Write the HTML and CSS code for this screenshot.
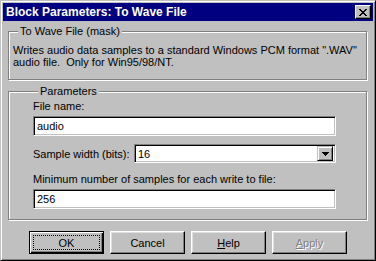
FILE: index.html
```html
<!DOCTYPE html>
<html lang="en">
<head>
    <meta charset="UTF-8">
    <title>Block Parameters: To Wave File</title>
    <link rel="stylesheet" href="styles.css">
</head>
<body>

    <div class="window">

        <div class="titleBar">
            <span class="titleText">Block Parameters: To Wave File</span>
            <button class="btnClose">
                <svg width="8" height="7" viewBox="0 0 8 7">
                    <path d="M0 0h2v1h1v1h2V1h1V0h2v1H7v1H6v1H5v1h1v1h1v1h1v1H6V6H5V5H3v1H2v1H0V6h1V5h1V4h1V3H2V2H1V1H0z" fill="#000"/>
                </svg>
            </button>
        </div>

        <fieldset class="grupo grupoMask">
            <legend>To Wave File (mask)</legend>
            <p class="descripcion">Writes audio data samples to a standard Windows PCM format ".WAV"<br>audio file.&nbsp; Only for Win95/98/NT.</p>
        </fieldset>

        <fieldset class="grupo grupoParams">
            <legend>Parameters</legend>

            <div class="etiqueta">File name:</div>
            <div class="campo">audio</div>

            <div class="filaSelect">
                <span class="etiqueta">Sample width (bits):</span>
                <div class="combo">
                    <span class="comboValor">16</span>
                    <span class="comboFlecha">
                        <svg width="7" height="4" viewBox="0 0 7 4"><path d="M0 0h7v1H6v1H5v1H4v1H3V3H2V2H1V1H0z" fill="#000"/></svg>
                    </span>
                </div>
            </div>

            <div class="etiqueta etiquetaMin">Minimum number of samples for each write to file:</div>
            <div class="campo">256</div>
        </fieldset>

        <div class="botonera">
            <button class="btn btnDefault"><span class="foco">OK</span></button>
            <button class="btn">Cancel</button>
            <button class="btn"><u>H</u>elp</button>
            <button class="btn btnDisabled"><u>A</u>pply</button>
        </div>

    </div>

</body>
</html>
```

FILE: styles.css
```css
body{
    margin: 0;
    background-color: #c0c0c0;
}

.window{
    width: 376px;
    height: 261px;
    box-sizing: border-box;
    background-color: #c0c0c0;
    border: 1px solid;
    border-color: #c0c0c0 #000 #000 #c0c0c0;
    box-shadow: inset 1px 1px #fff, inset -1px -1px #808080;
    padding: 2px;
    font-family: "Liberation Sans", Arial, sans-serif;
    font-size: 11px;
    color: #000;
}

.titleBar{
    height: 18px;
    background-color: #000080;
    display: flex;
    align-items: center;
    justify-content: space-between;
    padding: 0 2px 0 3px;
}

.titleText{
    color: #fff;
    font-weight: bold;
    font-size: 12px;
}

.btnClose{
    width: 16px;
    height: 14px;
    padding: 0;
    margin: 0;
    border: 1px solid;
    border-color: #fff #000 #000 #fff;
    box-shadow: inset -1px -1px #808080;
    background-color: #c0c0c0;
    display: flex;
    align-items: center;
    justify-content: center;
}

/* cajas de grupo con borde grabado */
.grupo{
    margin: 4px 6px 0 5px;
    padding: 0;
    border: 1px solid #808080;
    box-shadow: inset 1px 1px #fff, 1px 1px #fff;
    min-width: 0;
}

.grupo legend{
    padding: 0 2px;
    margin-left: 5px;
    line-height: 13px;
    background-color: #c0c0c0;
}

.grupoMask{
    padding: 6px 4px 11px 4px;
}

.descripcion{
    margin: 0;
    line-height: 12px;
    white-space: nowrap;
}

.grupoParams{
    margin-top: 5px;
    padding: 2px 30px 10px 24px;
}

.etiqueta{
    line-height: 12px;
}

.campo{
    height: 20px;
    box-sizing: border-box;
    margin-top: 4px;
    background-color: #fff;
    border: 1px solid;
    border-color: #808080 #fff #fff #808080;
    box-shadow: inset 1px 1px #000, inset -1px -1px #c0c0c0;
    padding: 0 3px;
    line-height: 18px;
}

.filaSelect{
    display: flex;
    align-items: center;
    justify-content: space-between;
    margin-top: 8px;
}

.combo{
    width: 202px;
    height: 19px;
    box-sizing: border-box;
    background-color: #fff;
    border: 1px solid;
    border-color: #808080 #fff #fff #808080;
    box-shadow: inset 1px 1px #000, inset -1px -1px #c0c0c0;
    padding: 2px 2px 2px 3px;
    display: flex;
    align-items: center;
    justify-content: space-between;
}

.comboFlecha{
    width: 16px;
    height: 15px;
    box-sizing: border-box;
    background-color: #c0c0c0;
    border: 1px solid;
    border-color: #c0c0c0 #000 #000 #c0c0c0;
    box-shadow: inset 1px 1px #fff, inset -1px -1px #808080;
    display: flex;
    align-items: center;
    justify-content: center;
}

.etiquetaMin{
    margin-top: 10px;
}

.botonera{
    display: flex;
    gap: 6px;
    margin: 11px 0 0 26px;
}

.btn{
    width: 75px;
    height: 23px;
    box-sizing: border-box;
    padding: 0;
    margin: 0;
    font-family: "Liberation Sans", Arial, sans-serif;
    font-size: 11px;
    color: #000;
    background-color: #c0c0c0;
    border: 1px solid;
    border-color: #fff #000 #000 #fff;
    box-shadow: inset -1px -1px #808080, inset 1px 1px #dfdfdf;
}

.btnDefault{
    border: 1px solid #000;
    box-shadow: inset 1px 1px #fff, inset -1px -1px #000, inset -2px -2px #808080;
    padding: 3px;
}

.foco{
    display: flex;
    align-items: center;
    justify-content: center;
    height: 100%;
    box-sizing: border-box;
    border: 1px dotted #000;
}

.btnDisabled{
    color: #808080;
    text-shadow: 1px 1px #fff;
}
```
